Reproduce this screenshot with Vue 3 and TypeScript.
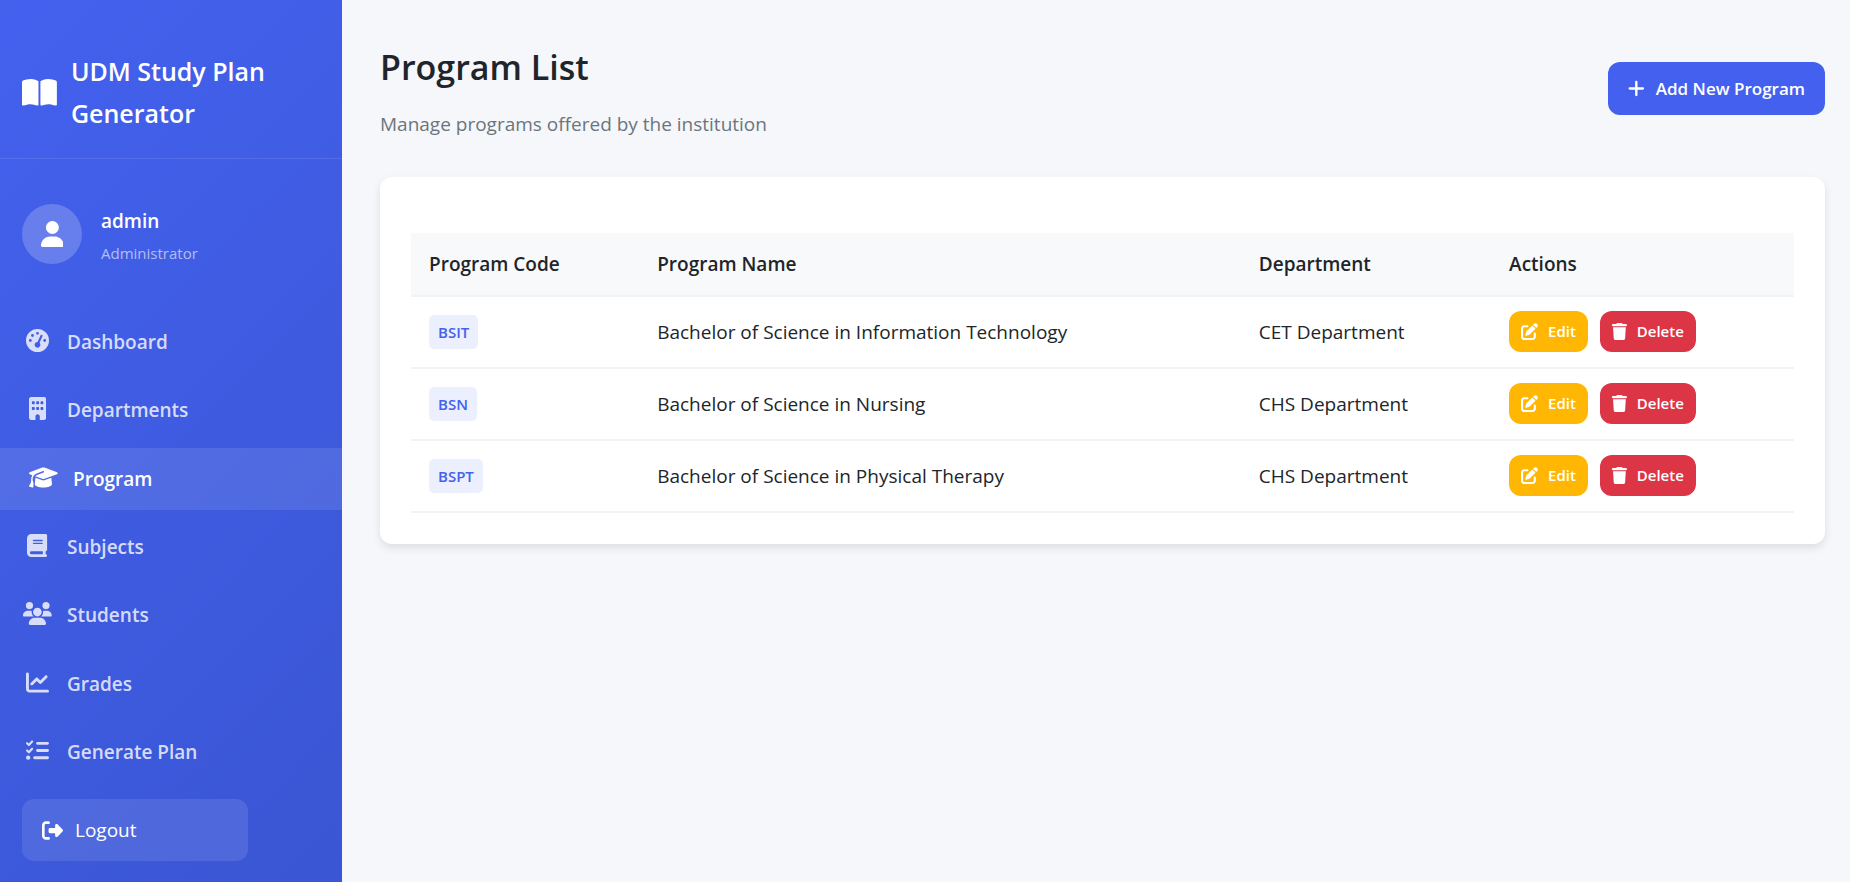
<script setup lang="ts">
import { ref } from 'vue'

interface Icon {
  width: number
  path: string
}

interface NavItem {
  label: string
  icon: Icon
}

interface Program {
  code: string
  name: string
  department: string
}

const icons: Record<string, Icon> = {
  bookOpen: {
    width: 576,
    path: 'M249.6 471.5c10.8 3.8 22.4-4.1 22.4-15.5V78.6c0-4.2-1.6-8.4-5-11C247.4 52 202.4 32 144 32C93.5 32 46.3 45.3 18.1 56.1C6.8 60.5 0 71.7 0 83.8V454.1c0 11.9 12.8 20.2 24.1 16.5C55.6 460.1 105.5 448 144 448c33.9 0 79 14 105.6 23.5zm76.8 0C353 462 398.1 448 432 448c38.5 0 88.4 12.1 119.9 22.6c11.3 3.8 24.1-4.6 24.1-16.5V83.8c0-12.1-6.8-23.3-18.1-27.6C529.7 45.3 482.5 32 432 32c-58.4 0-103.4 20-123 35.6c-3.3 2.6-5 6.8-5 11V456c0 11.4 11.7 19.3 22.4 15.5z',
  },
  user: {
    width: 448,
    path: 'M224 256A128 128 0 1 0 224 0a128 128 0 1 0 0 256zm-45.7 48C79.8 304 0 383.8 0 482.3C0 498.7 13.3 512 29.7 512H418.3c16.4 0 29.7-13.3 29.7-29.7C448 383.8 368.2 304 269.7 304H178.3z',
  },
  gauge: {
    width: 512,
    path: 'M0 256a256 256 0 1 1 512 0A256 256 0 1 1 0 256zM288 96a32 32 0 1 0 -64 0 32 32 0 1 0 64 0zM256 416c35.3 0 64-28.7 64-64c0-17.4-6.9-33.1-18.1-44.6L366 161.7c5.3-12.1-.2-26.3-12.3-31.6s-26.3 .2-31.6 12.3L257.9 288c-.6 0-1.3 0-1.9 0c-35.3 0-64 28.7-64 64s28.7 64 64 64zM176 144a32 32 0 1 0 -64 0 32 32 0 1 0 64 0zM96 288a32 32 0 1 0 0-64 32 32 0 1 0 0 64zm352-32a32 32 0 1 0 -64 0 32 32 0 1 0 64 0z',
  },
  building: {
    width: 384,
    path: 'M48 0C21.5 0 0 21.5 0 48V464c0 26.5 21.5 48 48 48h96V432c0-26.5 21.5-48 48-48s48 21.5 48 48v80h96c26.5 0 48-21.5 48-48V48c0-26.5-21.5-48-48-48H48zM64 240c0-8.8 7.2-16 16-16h32c8.8 0 16 7.2 16 16v32c0 8.8-7.2 16-16 16H80c-8.8 0-16-7.2-16-16V240zm112-16h32c8.8 0 16 7.2 16 16v32c0 8.8-7.2 16-16 16H176c-8.8 0-16-7.2-16-16V240c0-8.8 7.2-16 16-16zm80 16c0-8.8 7.2-16 16-16h32c8.8 0 16 7.2 16 16v32c0 8.8-7.2 16-16 16H272c-8.8 0-16-7.2-16-16V240zM80 96h32c8.8 0 16 7.2 16 16v32c0 8.8-7.2 16-16 16H80c-8.8 0-16-7.2-16-16V112c0-8.8 7.2-16 16-16zm80 16c0-8.8 7.2-16 16-16h32c8.8 0 16 7.2 16 16v32c0 8.8-7.2 16-16 16H176c-8.8 0-16-7.2-16-16V112zM272 96h32c8.8 0 16 7.2 16 16v32c0 8.8-7.2 16-16 16H272c-8.8 0-16-7.2-16-16V112c0-8.8 7.2-16 16-16z',
  },
  graduationCap: {
    width: 640,
    path: 'M320 32c-8.1 0-16.1 1.4-23.7 4.1L15.8 137.4C6.3 140.9 0 149.9 0 160s6.3 19.1 15.8 22.6l57.9 20.9C57.3 229.3 48 259.8 48 291.9v28.1c0 28.4-10.8 57.7-22.3 80.8c-6.5 13-13.9 25.8-22.5 37.6C0 442.7-.9 448.3 .9 453.4s6 8.9 11.2 10.2l64 16c4.2 1.1 8.7 .3 12.4-2s6.3-6.1 7.1-10.4c8.6-42.8 4.3-81.2-2.1-108.7C90.3 344.3 86 329.8 80 316.5V291.9c0-30.2 10.2-58.7 27.9-81.5c12.9-15.5 29.6-28 49.2-35.7l157-61.7c8.2-3.2 17.5 .8 20.7 9s-.8 17.5-9 20.7l-157 61.7c-12.4 4.9-23.3 12.4-32.2 21.6l159.6 57.6c7.6 2.7 15.6 4.1 23.7 4.1s16.1-1.4 23.7-4.1L624.2 182.6c9.5-3.4 15.8-12.5 15.8-22.6s-6.3-19.1-15.8-22.6L343.7 36.1C336.1 33.4 328.1 32 320 32zM128 408c0 35.3 86 72 192 72s192-36.7 192-72L496.7 262.6 354.5 314c-11.1 4-22.8 6-34.5 6s-23.5-2-34.5-6L143.3 262.6 128 408z',
  },
  book: {
    width: 448,
    path: 'M96 0C43 0 0 43 0 96V416c0 53 43 96 96 96H384h32c17.7 0 32-14.3 32-32s-14.3-32-32-32V384c17.7 0 32-14.3 32-32V32c0-17.7-14.3-32-32-32H384 96zm0 384H352v64H96c-17.7 0-32-14.3-32-32s14.3-32 32-32zm32-240c0-8.8 7.2-16 16-16H336c8.8 0 16 7.2 16 16s-7.2 16-16 16H144c-8.8 0-16-7.2-16-16zm16 48H336c8.8 0 16 7.2 16 16s-7.2 16-16 16H144c-8.8 0-16-7.2-16-16s7.2-16 16-16z',
  },
  users: {
    width: 640,
    path: 'M144 0a80 80 0 1 1 0 160A80 80 0 1 1 144 0zM512 0a80 80 0 1 1 0 160A80 80 0 1 1 512 0zM0 298.7C0 239.8 47.8 192 106.7 192h42.7c15.9 0 31 3.5 44.6 9.7c-1.3 7.2-1.9 14.7-1.9 22.3c0 38.2 16.8 72.5 43.3 96c-.2 0-.4 0-.7 0H21.3C9.6 320 0 310.4 0 298.7zM405.3 320c-.2 0-.4 0-.7 0c26.6-23.5 43.3-57.8 43.3-96c0-7.6-.7-15-1.9-22.3c13.6-6.3 28.7-9.7 44.6-9.7h42.7C592.2 192 640 239.8 640 298.7c0 11.8-9.6 21.3-21.3 21.3H405.3zM224 224a96 96 0 1 1 192 0 96 96 0 1 1 -192 0zM128 485.3C128 411.7 187.7 352 261.3 352H378.7C452.3 352 512 411.7 512 485.3c0 14.7-11.9 26.7-26.7 26.7H154.7c-14.7 0-26.7-11.9-26.7-26.7z',
  },
  chartLine: {
    width: 512,
    path: 'M64 64c0-17.7-14.3-32-32-32S0 46.3 0 64V400c0 44.2 35.8 80 80 80H480c17.7 0 32-14.3 32-32s-14.3-32-32-32H80c-8.8 0-16-7.2-16-16V64zm406.6 86.6c12.5-12.5 12.5-32.8 0-45.3s-32.8-12.5-45.3 0L320 210.7l-57.4-57.4c-12.5-12.5-32.8-12.5-45.3 0l-112 112c-12.5 12.5-12.5 32.8 0 45.3s32.8 12.5 45.3 0L240 221.3l57.4 57.4c12.5 12.5 32.8 12.5 45.3 0l128-128z',
  },
  listCheck: {
    width: 512,
    path: 'M152.1 38.2c9.9 8.9 10.7 24 1.8 33.9l-72 80c-4.4 4.9-10.6 7.8-17.2 7.9s-12.9-2.4-17.6-7L7 113C-2.3 103.6-2.3 88.4 7 79s24.6-9.4 33.9 0l22.1 22.1 55.1-61.2c8.9-9.9 24-10.7 33.9-1.8zm0 160c9.9 8.9 10.7 24 1.8 33.9l-72 80c-4.4 4.9-10.6 7.8-17.2 7.9s-12.9-2.4-17.6-7L7 273c-9.4-9.4-9.4-24.6 0-33.9s24.6-9.4 33.9 0l22.1 22.1 55.1-61.2c8.9-9.9 24-10.7 33.9-1.8zM224 96c0-17.7 14.3-32 32-32H480c17.7 0 32 14.3 32 32s-14.3 32-32 32H256c-17.7 0-32-14.3-32-32zm0 160c0-17.7 14.3-32 32-32H480c17.7 0 32 14.3 32 32s-14.3 32-32 32H256c-17.7 0-32-14.3-32-32zM160 416c0-17.7 14.3-32 32-32H480c17.7 0 32 14.3 32 32s-14.3 32-32 32H192c-17.7 0-32-14.3-32-32zM48 368a48 48 0 1 1 0 96 48 48 0 1 1 0-96z',
  },
  signOut: {
    width: 512,
    path: 'M377.9 105.9L500.7 228.7c7.2 7.2 11.3 17.1 11.3 27.3s-4.1 20.1-11.3 27.3L377.9 406.1c-6.4 6.4-15 9.9-24 9.9c-18.7 0-33.9-15.2-33.9-33.9l0-62.1-128 0c-17.7 0-32-14.3-32-32l0-64c0-17.7 14.3-32 32-32l128 0 0-62.1c0-18.7 15.2-33.9 33.9-33.9c9 0 17.6 3.6 24 9.9zM160 96L96 96c-17.7 0-32 14.3-32 32l0 256c0 17.7 14.3 32 32 32l64 0c17.7 0 32 14.3 32 32s-14.3 32-32 32l-64 0c-53 0-96-43-96-96L0 128C0 75 43 32 96 32l64 0c17.7 0 32 14.3 32 32s-14.3 32-32 32z',
  },
  plus: {
    width: 448,
    path: 'M256 80c0-17.7-14.3-32-32-32s-32 14.3-32 32V224H48c-17.7 0-32 14.3-32 32s14.3 32 32 32H192V432c0 17.7 14.3 32 32 32s32-14.3 32-32V288H400c17.7 0 32-14.3 32-32s-14.3-32-32-32H256V80z',
  },
  edit: {
    width: 512,
    path: 'M471.6 21.7c-21.9-21.9-57.3-21.9-79.2 0L362.3 51.7l97.9 97.9 30.1-30.1c21.9-21.9 21.9-57.3 0-79.2L471.6 21.7zm-299.2 220c-6.1 6.1-10.8 13.6-13.5 21.9l-29.6 88.8c-2.9 8.6-.6 18.1 5.8 24.6s15.9 8.7 24.6 5.8l88.8-29.6c8.2-2.7 15.7-7.4 21.9-13.5L437.7 172.3 339.7 74.3 172.4 241.7zM96 64C43 64 0 107 0 160V416c0 53 43 96 96 96H352c53 0 96-43 96-96V320c0-17.7-14.3-32-32-32s-32 14.3-32 32v96c0 17.7-14.3 32-32 32H96c-17.7 0-32-14.3-32-32V160c0-17.7 14.3-32 32-32h96c17.7 0 32-14.3 32-32s-14.3-32-32-32H96z',
  },
  trash: {
    width: 448,
    path: 'M135.2 17.7L128 32H32C14.3 32 0 46.3 0 64S14.3 96 32 96H416c17.7 0 32-14.3 32-32s-14.3-32-32-32H320l-7.2-14.3C307.4 6.8 296.3 0 284.2 0H163.8c-12.1 0-23.2 6.8-28.6 17.7zM416 128H32L53.2 467c1.6 25.3 22.6 45 47.9 45H346.9c25.3 0 46.3-19.7 47.9-45L416 128z',
  },
}

const viewBox = (icon: Icon): string => `0 0 ${icon.width} 512`

const navItems: NavItem[] = [
  { label: 'Dashboard', icon: icons.gauge },
  { label: 'Departments', icon: icons.building },
  { label: 'Program', icon: icons.graduationCap },
  { label: 'Subjects', icon: icons.book },
  { label: 'Students', icon: icons.users },
  { label: 'Grades', icon: icons.chartLine },
  { label: 'Generate Plan', icon: icons.listCheck },
]

const activeItem = ref('Program')

const programs = ref<Program[]>([
  { code: 'BSIT', name: 'Bachelor of Science in Information Technology', department: 'CET Department' },
  { code: 'BSN', name: 'Bachelor of Science in Nursing', department: 'CHS Department' },
  { code: 'BSPT', name: 'Bachelor of Science in Physical Therapy', department: 'CHS Department' },
])
</script>

<template>
  <div class="layout">
    <aside class="sidebar">
      <div class="brand">
        <svg class="brand-icon" :viewBox="viewBox(icons.bookOpen)" aria-hidden="true">
          <path :d="icons.bookOpen.path" />
        </svg>
        <span class="brand-name">UDM Study Plan Generator</span>
      </div>

      <div class="profile">
        <div class="avatar">
          <svg class="avatar-icon" :viewBox="viewBox(icons.user)" aria-hidden="true">
            <path :d="icons.user.path" />
          </svg>
        </div>
        <div class="profile-text">
          <span class="profile-name">admin</span>
          <span class="profile-role">Administrator</span>
        </div>
      </div>

      <nav class="nav" aria-label="Main">
        <a
          v-for="item in navItems"
          :key="item.label"
          href="#"
          class="nav-link"
          :class="{ active: item.label === activeItem }"
          :aria-current="item.label === activeItem ? 'page' : undefined"
          @click.prevent="activeItem = item.label"
        >
          <span class="nav-icon">
            <svg :viewBox="viewBox(item.icon)" aria-hidden="true"><path :d="item.icon.path" /></svg>
          </span>
          <span>{{ item.label }}</span>
        </a>
      </nav>

      <button type="button" class="logout">
        <svg class="logout-icon" :viewBox="viewBox(icons.signOut)" aria-hidden="true">
          <path :d="icons.signOut.path" />
        </svg>
        <span>Logout</span>
      </button>
    </aside>

    <main class="content">
      <header class="page-header">
        <div>
          <h1 class="page-title">Program List</h1>
          <p class="page-subtitle">Manage programs offered by the institution</p>
        </div>
        <button type="button" class="btn btn-primary">
          <svg :viewBox="viewBox(icons.plus)" aria-hidden="true"><path :d="icons.plus.path" /></svg>
          <span>Add New Program</span>
        </button>
      </header>

      <section class="card">
        <table class="programs">
          <colgroup>
            <col class="col-code" />
            <col class="col-name" />
            <col class="col-department" />
            <col />
          </colgroup>
          <thead>
            <tr>
              <th scope="col">Program Code</th>
              <th scope="col">Program Name</th>
              <th scope="col">Department</th>
              <th scope="col">Actions</th>
            </tr>
          </thead>
          <tbody>
            <tr v-for="program in programs" :key="program.code">
              <td><span class="code">{{ program.code }}</span></td>
              <td>{{ program.name }}</td>
              <td>{{ program.department }}</td>
              <td>
                <div class="actions">
                  <button type="button" class="btn btn-small btn-edit">
                    <svg :viewBox="viewBox(icons.edit)" aria-hidden="true"><path :d="icons.edit.path" /></svg>
                    <span>Edit</span>
                  </button>
                  <button type="button" class="btn btn-small btn-delete">
                    <svg :viewBox="viewBox(icons.trash)" aria-hidden="true"><path :d="icons.trash.path" /></svg>
                    <span>Delete</span>
                  </button>
                </div>
              </td>
            </tr>
          </tbody>
        </table>
      </section>
    </main>
  </div>
</template>

<style>
body {
  margin: 0;
  background: #f5f7fb;
}
</style>

<style scoped>
.layout {
  display: flex;
  min-height: 100vh;
  color: #212529;
  font-family: 'Segoe UI', 'Open Sans', 'Noto Sans', sans-serif;
  font-size: 19px;
  line-height: 30px;
}

.layout *,
.layout *::before {
  box-sizing: border-box;
}

svg {
  display: block;
  flex: none;
  fill: currentColor;
}

button {
  border: 0;
  font-family: inherit;
  cursor: pointer;
}

.sidebar {
  display: flex;
  flex: none;
  flex-direction: column;
  width: 342px;
  padding-bottom: 21px;
  background: linear-gradient(135deg, #4361ee, #3a56d4);
  color: #fff;
}

.brand {
  display: flex;
  align-items: center;
  gap: 14px;
  padding: 50px 22px 24px;
  border-bottom: 1px solid rgba(255, 255, 255, 0.1);
}

.brand-icon {
  height: 31px;
}

.brand-name {
  font-size: 25px;
  font-weight: 600;
  line-height: 42px;
}

.profile {
  display: flex;
  align-items: center;
  gap: 19px;
  padding: 41px 22px 43px;
}

.avatar {
  display: grid;
  place-items: center;
  width: 60px;
  height: 60px;
  border-radius: 50%;
  background: rgba(255, 255, 255, 0.2);
}

.avatar-icon {
  height: 26px;
}

.profile-text {
  display: flex;
  flex-direction: column;
  gap: 2px;
  padding-top: 6px;
}

.profile-name {
  font-weight: 600;
}

.profile-role {
  color: rgba(255, 255, 255, 0.6);
  font-size: 15px;
}

.nav {
  display: flex;
  flex: 1;
  flex-direction: column;
  justify-content: space-between;
  margin-bottom: 16px;
}

.nav-link {
  display: flex;
  align-items: center;
  gap: 14px;
  padding: 16px 22px;
  color: rgba(255, 255, 255, 0.8);
  font-weight: 600;
  text-decoration: none;
}

.nav-link.active {
  padding-left: 28px;
  background: rgba(255, 255, 255, 0.1);
  color: #fff;
}

.nav-icon {
  display: flex;
  justify-content: center;
  width: 31px;
  padding-bottom: 3px;
}

.nav-icon svg {
  height: 23px;
}

.logout {
  display: flex;
  align-items: center;
  gap: 12px;
  width: 226px;
  margin-left: 22px;
  padding: 16px 20px;
  border-radius: 12px;
  background: rgba(255, 255, 255, 0.1);
  color: #fff;
  font-size: 19px;
  line-height: 30px;
}

.logout-icon {
  height: 21px;
}

.content {
  flex: 1;
  min-width: 0;
  padding: 37px 25px 37px 38px;
}

.page-header {
  display: flex;
  align-items: center;
  justify-content: space-between;
  margin-bottom: 38px;
}

.page-title {
  margin: 0 0 12px;
  font-size: 34px;
  font-weight: 600;
  line-height: 60px;
}

.page-subtitle {
  margin: 0;
  color: #6c757d;
}

.btn {
  display: flex;
  align-items: center;
  gap: 10px;
  border-radius: 12px;
  color: #fff;
  font-weight: 600;
}

.btn-primary {
  gap: 11px;
  padding: 12px 20px;
  background: #4361ee;
  font-size: 17px;
  line-height: 29px;
}

.btn-primary svg {
  height: 19px;
}

.card {
  padding: 56px 31px 31px;
  border-radius: 12px;
  background: #fff;
  box-shadow: 0 4px 8px rgba(0, 0, 0, 0.1);
}

.programs {
  width: 100%;
  border-collapse: collapse;
  table-layout: fixed;
}

.col-code {
  width: 16.5%;
}

.col-name {
  width: 43.5%;
}

.col-department {
  width: 18.1%;
}

th,
td {
  padding: 14px 18px 15px;
  border-bottom: 2px solid #f2f3f5;
  text-align: left;
}

th {
  padding-block: 16px;
  background: #f8f9fb;
  font-weight: 600;
}

.code {
  display: inline-block;
  padding: 5px 9px;
  border-radius: 5px;
  background: #eceffd;
  color: #4361ee;
  font-size: 15px;
  font-weight: 600;
  line-height: 24px;
}

.actions {
  display: flex;
  gap: 12px;
}

.btn-small {
  padding: 8px 12px;
  font-size: 15px;
  line-height: 25px;
}

.btn-small svg {
  height: 17px;
}

.btn-edit {
  background: #ffb703;
}

.btn-delete {
  background: #dc3545;
}
</style>
